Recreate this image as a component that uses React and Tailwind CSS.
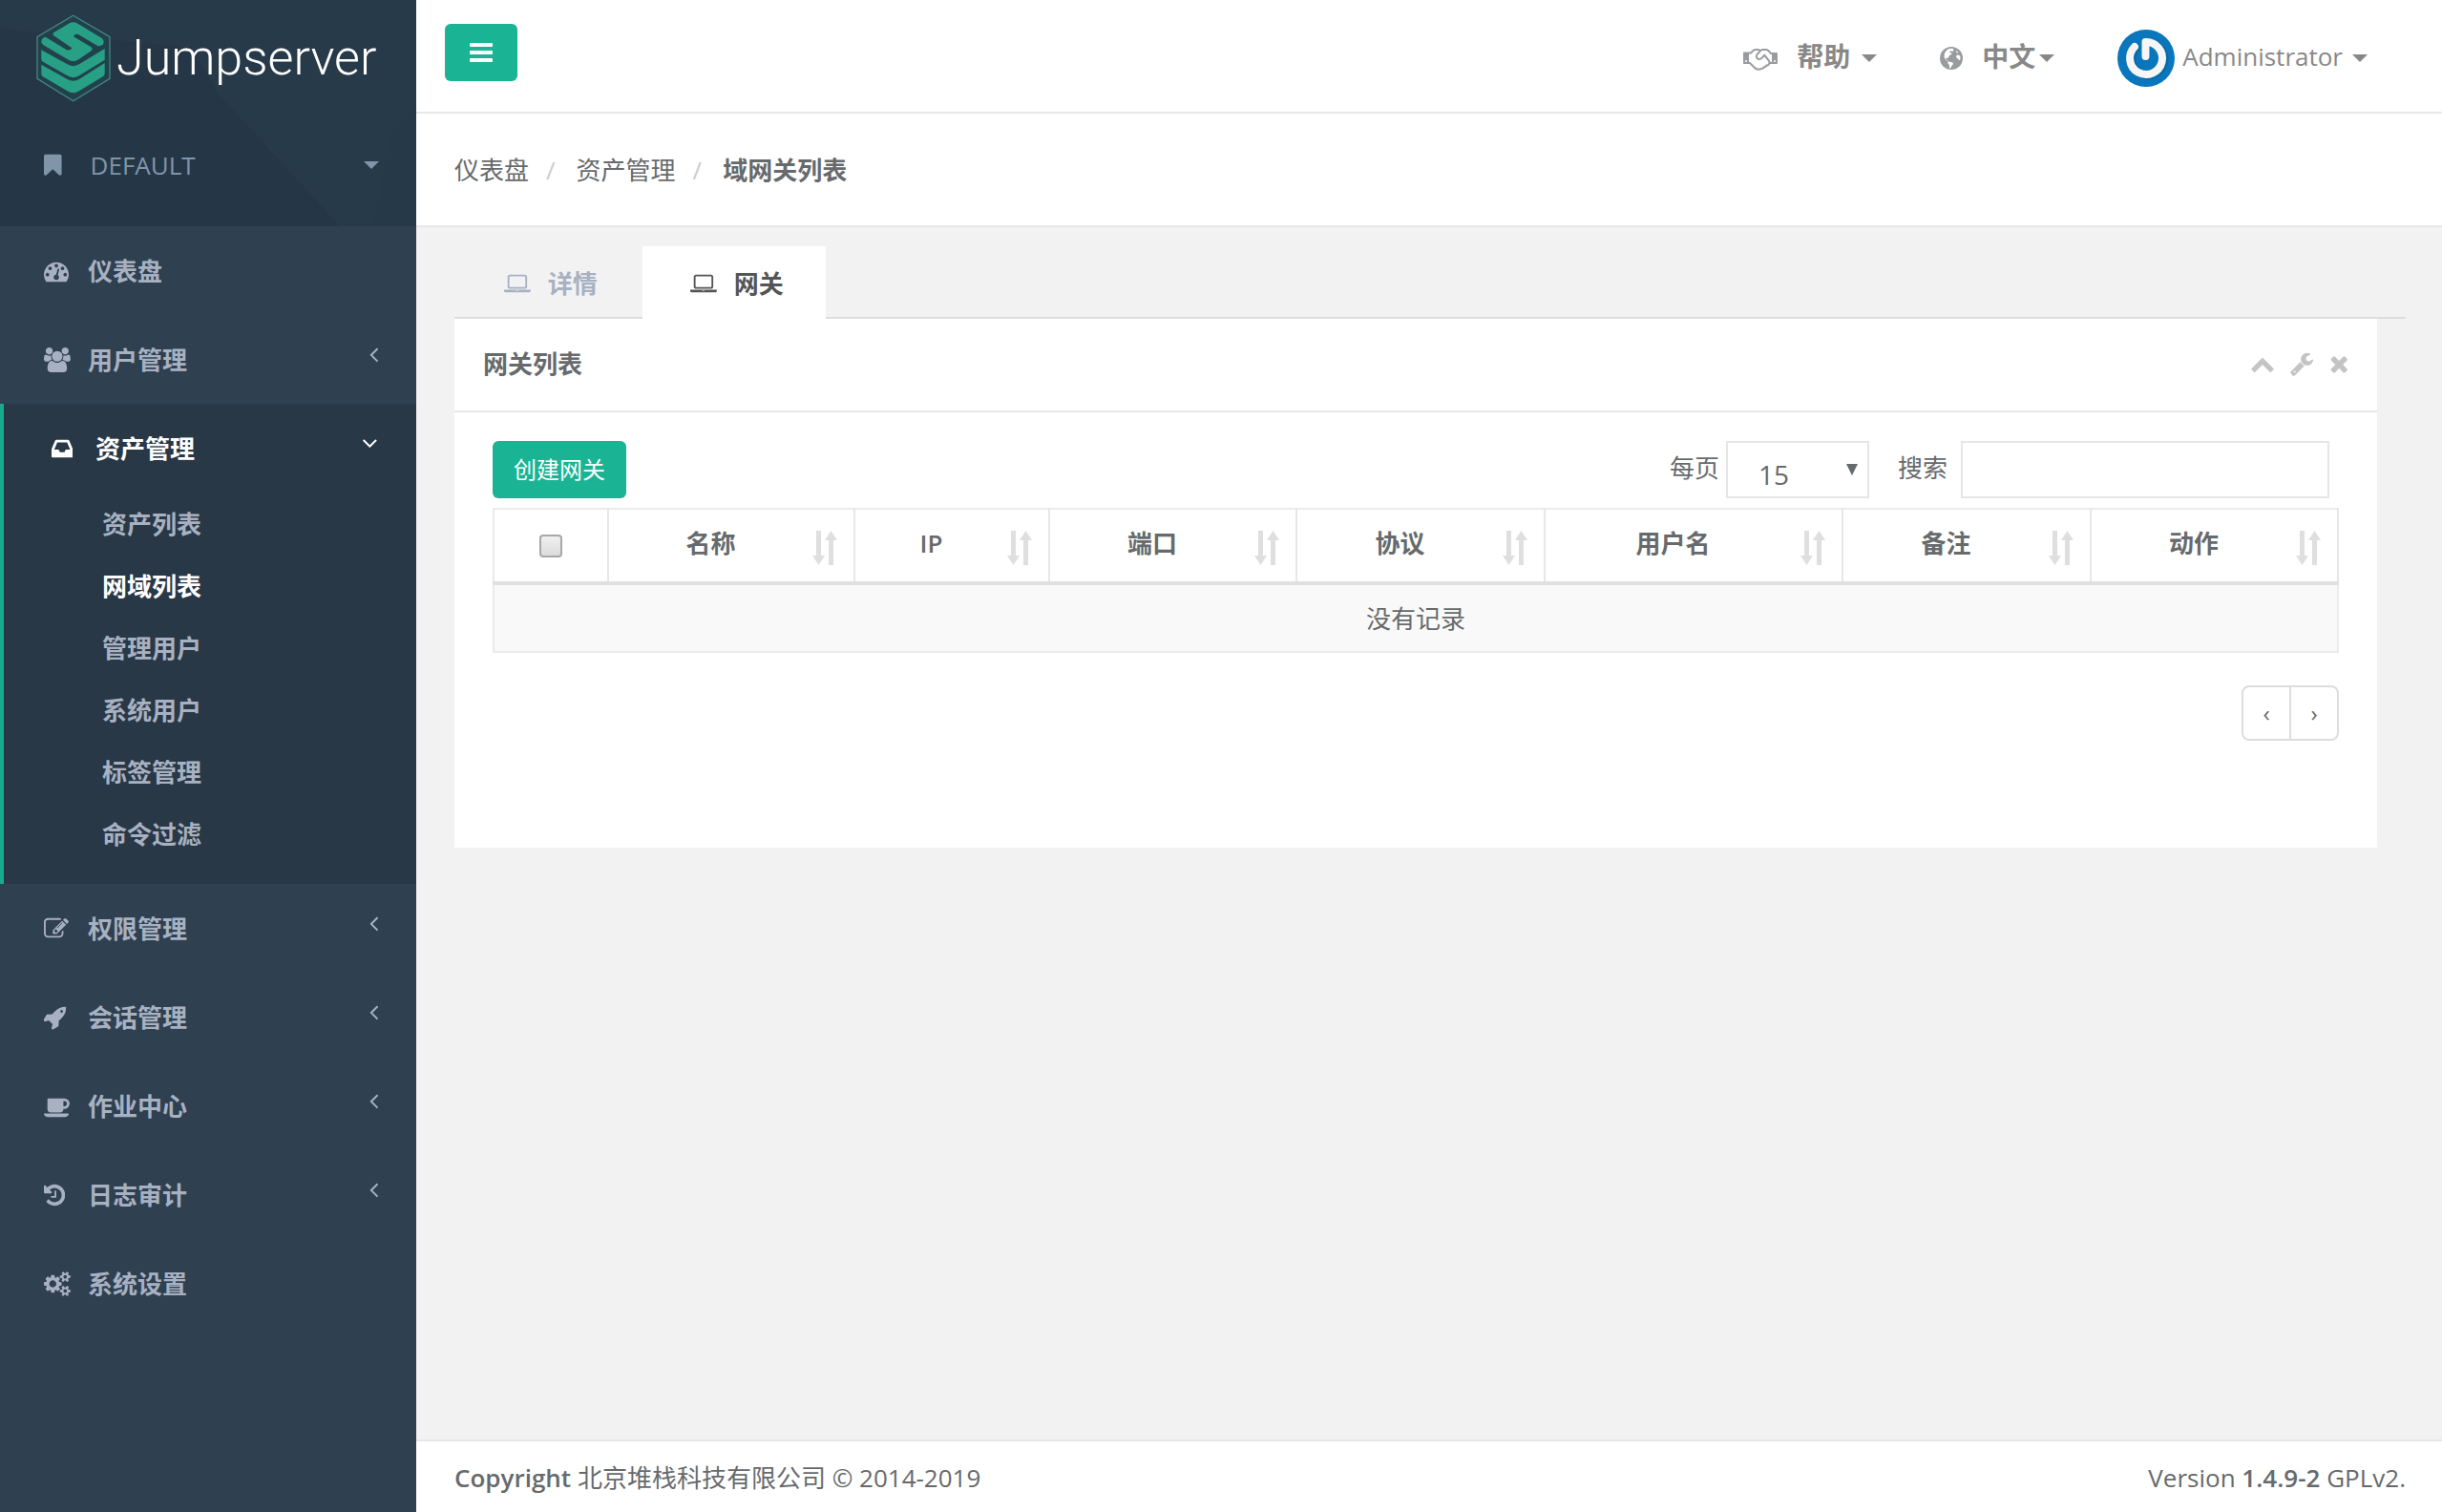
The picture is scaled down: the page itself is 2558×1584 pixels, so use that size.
import React from "react";

const ICONS = {
  bars: ["128 0 1536 1792", "M1664 1344v128q0 26-19 45t-45 19h-1408q-26 0-45-19t-19-45v-128q0-26 19-45t45-19h1408q26 0 45 19t19 45zm0-512v128q0 26-19 45t-45 19h-1408q-26 0-45-19t-19-45v-128q0-26 19-45t45-19h1408q26 0 45 19t19 45zm0-512v128q0 26-19 45t-45 19h-1408q-26 0-45-19t-19-45v-128q0-26 19-45t45-19h1408q26 0 45 19t19 45z"],
  dashboard: ["0 0 1792 1792", "M384 1152q0-53-37.5-90.5t-90.5-37.5-90.5 37.5-37.5 90.5 37.5 90.5 90.5 37.5 90.5-37.5 37.5-90.5zm192-448q0-53-37.5-90.5t-90.5-37.5-90.5 37.5-37.5 90.5 37.5 90.5 90.5 37.5 90.5-37.5 37.5-90.5zm428 481l101-382q6-26-7.5-48.5t-38.5-29.5-48 6.5-30 39.5l-101 382q-60 5-107 43.5t-63 98.5q-20 77 20 146t117 89 146-20 89-117q16-60-6-117t-72-91zm660-33q0-53-37.5-90.5t-90.5-37.5-90.5 37.5-37.5 90.5 37.5 90.5 90.5 37.5 90.5-37.5 37.5-90.5zm-640-640q0-53-37.5-90.5t-90.5-37.5-90.5 37.5-37.5 90.5 37.5 90.5 90.5 37.5 90.5-37.5 37.5-90.5zm448 192q0-53-37.5-90.5t-90.5-37.5-90.5 37.5-37.5 90.5 37.5 90.5 90.5 37.5 90.5-37.5 37.5-90.5zm320 448q0 261-141 483-19 29-54 29h-1402q-35 0-54-29-141-221-141-483 0-182 71-348t191-286 286-191 348-71 348 71 286 191 191 286 71 348z"],
  group: ["-64 0 1920 1792", "M529 896q-162 5-265 128h-134q-82 0-138-40.5t-56-118.5q0-353 124-353 6 0 43.5 21t97.5 42.5 119 21.5q67 0 133-23-5 37-5 66 0 139 81 256zm1071 637q0 120-73 189.5t-194 69.5h-874q-121 0-194-69.5t-73-189.5q0-53 3.5-103.5t14-109 26.5-108.5 43-97.5 62-81 85.5-53.5 111.5-20q10 0 43 21.5t73 48 107 48 135 21.5 135-21.5 107-48 73-48 43-21.5q61 0 111.5 20t85.5 53.5 62 81 43 97.5 26.5 108.5 14 109 3.5 103.5zm-1024-1277q0 106-75 181t-181 75-181-75-75-181 75-181 181-75 181 75 75 181zm704 384q0 159-112.5 271.5t-271.5 112.5-271.5-112.5-112.5-271.5 112.5-271.5 271.5-112.5 271.5 112.5 112.5 271.5zm576 225q0 78-56 118.5t-138 40.5h-134q-103-123-265-128 81-117 81-256 0-29-5-66 66 23 133 23 59 0 119-21.5t97.5-42.5 43.5-21q124 0 124 353zm-128-609q0 106-75 181t-181 75-181-75-75-181 75-181 181-75 181 75 75 181z"],
  inbox: ["128 0 1536 1792", "M1151 960h316q-1-3-2.5-8t-2.5-8l-212-496h-708l-212 496q-1 2-2.5 8t-2.5 8h316l95 192h320zm513 30v482q0 26-19 45t-45 19h-1408q-26 0-45-19t-19-45v-482q0-62 25-123l238-552q10-25 36.5-42t52.5-17h832q26 0 52.5 17t36.5 42l238 552q25 61 25 123z"],
  edit: ["0 0 1792 1792", "M888 1184l116-116-152-152-116 116v56h96v96h56zm440-720q-16-16-33 1l-350 350q-17 17-1 33t33-1l350-350q17-17 1-33zm80 594v190q0 119-84.5 203.5t-203.5 84.5h-832q-119 0-203.5-84.5t-84.5-203.5v-832q0-119 84.5-203.5t203.5-84.5h832q63 0 117 25 15 7 18 23 3 17-9 29l-49 49q-14 14-32 8-23-6-45-6h-832q-66 0-113 47t-47 113v832q0 66 47 113t113 47h832q66 0 113-47t47-113v-126q0-13 9-22l64-64q15-15 35-7t20 29zm-96-738l288 288-672 672h-288v-288zm444 132l-92 92-288-288 92-92q28-28 68-28t68 28l152 152q28 28 28 68t-28 68z"],
  rocket: ["64 0 1664 1792", "M1440 448q0-40-28-68t-68-28-68 28-28 68 28 68 68 28 68-28 28-68zm224-288q0 249-75.5 430.5t-253.5 360.5q-81 80-195 176l-20 379q-2 16-16 26l-384 224q-7 4-16 4-12 0-23-9l-64-64q-13-14-8-32l85-276-281-281-276 85q-3 1-9 1-14 0-23-9l-64-64q-17-19-5-39l224-384q10-14 26-16l379-20q96-114 176-195 188-187 358-258t431-71q14 0 24 9.5t10 22.5z"],
  coffee: ["0 0 1920 1792", "M1664 704q0-80-56-136t-136-56h-64v384h64q80 0 136-56t56-136zM0 1408h1792q0 106-75 181t-181 75h-1280q-106 0-181-75t-75-181zM1856 704q0 159-112.5 271.5t-271.5 112.5h-64v32q0 92-66 158t-158 66h-704q-92 0-158-66t-66-158v-736q0-26 19-45t45-19h1152q159 0 271.5 112.5t112.5 271.5z"],
  history: ["128 0 1536 1792", "M1664 896q0 156-61 298t-164 245-245 164-298 61q-172 0-327-72.5t-264-204.5q-7-10-6.5-22.5t8.5-20.5l137-138q10-9 25-9 16 2 23 12 73 95 179 147t225 52q104 0 198.5-40.5t163.5-109.5 109.5-163.5 40.5-198.5-40.5-198.5-109.5-163.5-163.5-109.5-198.5-40.5q-98 0-188 35.5t-160 101.5l137 138q31 30 14 69-17 40-59 40h-448q-26 0-45-19t-19-45v-448q0-42 40-59 39-17 69 14l130 129q107-101 244.5-156.5t284.5-55.5q156 0 298 61t245 164 164 245 61 298zm-640-288v448q0 14-9 23t-23 9h-320q-14 0-23-9t-9-23v-64q0-14 9-23t23-9h224v-352q0-14 9-23t23-9h64q14 0 23 9t9 23z"],
  cogs: ["0 0 1920 1792", "M896 896q0-106-75-181t-181-75-181 75-75 181 75 181 181 75 181-75 75-181zm768 512q0-52-38-90t-90-38-90 38-38 90q0 53 37.5 90.5t90.5 37.5 90.5-37.5 37.5-90.5zm0-1024q0-52-38-90t-90-38-90 38-38 90q0 53 37.5 90.5t90.5 37.5 90.5-37.5 37.5-90.5zm-384 421v185q0 10-7 19.5t-16 10.5l-155 24q-11 35-32 76 34 48 90 115 7 11 7 20 0 12-7 19-23 30-82.5 89.5t-78.5 59.5q-11 0-21-7l-115-90q-37 19-77 31-11 108-23 155-7 24-30 24h-186q-11 0-20-7.5t-10-17.5l-23-153q-34-10-75-31l-118 89q-7 7-20 7-11 0-21-8-144-133-144-160 0-9 7-19 10-14 41-53t47-61q-23-44-35-82l-152-24q-10-1-17-9.5t-7-19.5v-185q0-10 7-19.5t16-10.5l155-24q11-35 32-76-34-48-90-115-7-11-7-20 0-12 7-20 22-30 82-89t79-59q11 0 21 7l115 90q34-18 77-32 11-108 23-154 7-24 30-24h186q11 0 20 7.5t10 17.5l23 153q34 10 75 31l118-89q8-7 20-7 11 0 21 8 144 133 144 160 0 8-7 19-12 16-42 54t-45 60q23 48 34 82l152 23q10 2 17 10.5t7 19.5zm640 533v140q0 16-149 31-12 27-30 52 51 113 51 138 0 4-4 7-122 71-124 71-8 0-46-47t-52-68q-20 2-30 2t-30-2q-14 21-52 68t-46 47q-2 0-124-71-4-3-4-7 0-25 51-138-18-25-30-52-149-15-149-31v-140q0-16 149-31 13-29 30-52-51-113-51-138 0-4 4-7 4-2 35-20t59-34 30-16q8 0 46 46.5t52 67.5q20-2 30-2t30 2q51-71 92-112l6-2q4 0 124 70 4 3 4 7 0 25-51 138 17 23 30 52 149 15 149 31zm0-1024v140q0 16-149 31-12 27-30 52 51 113 51 138 0 4-4 7-122 71-124 71-8 0-46-47t-52-68q-20 2-30 2t-30-2q-14 21-52 68t-46 47q-2 0-124-71-4-3-4-7 0-25 51-138-18-25-30-52-149-15-149-31v-140q0-16 149-31 13-29 30-52-51-113-51-138 0-4 4-7 4-2 35-20t59-34 30-16q8 0 46 46.5t52 67.5q20-2 30-2t30 2q51-71 92-112l6-2q4 0 124 70 4 3 4 7 0 25-51 138 17 23 30 52 149 15 149 31z"],
  laptop: ["0 0 1920 1792", "M416 1280q-66 0-113-47t-47-113v-704q0-66 47-113t113-47h1088q66 0 113 47t47 113v704q0 66-47 113t-113 47h-1088zm-32-864v704q0 13 9.5 22.5t22.5 9.5h1088q13 0 22.5-9.5t9.5-22.5v-704q0-13-9.5-22.5t-22.5-9.5h-1088q-13 0-22.5 9.5t-9.5 22.5zm1376 928h160v96q0 40-47 68t-113 28h-1600q-66 0-113-28t-47-68v-96h1760zm-720 96q16 0 16-16t-16-16h-160q-16 0-16 16t16 16h160z"],
  bookmark: ["256 0 1280 1792", "M1420 128q23 0 44 9 33 13 52.5 41t19.5 62v1289q0 34-19.5 62t-52.5 41q-19 8-44 8-48 0-83-32l-441-424-441 424q-36 33-83 33-23 0-44-9-33-13-52.5-41t-19.5-62v-1289q0-34 19.5-62t52.5-41q21-9 44-9h1048z"],
  wrench: ["64 0 1664 1792", "M448 1472q0-26-19-45t-45-19-45 19-19 45 19 45 45 19 45-19 19-45zm644-420l-682 682q-37 37-90 37-52 0-91-37l-106-108q-38-36-38-90 0-53 38-91l681-681q39 98 114.5 173.5t173.5 114.5zm634-435q0 39-23 106-47 134-164.5 217.5t-258.5 83.5q-185 0-316.5-131.5t-131.5-316.5 131.5-316.5 316.5-131.5q58 0 121.5 16.5t107.5 46.5q16 11 16 28t-16 28l-293 169v224l193 107q5-3 79-48.5t135.5-81 70.5-35.5q15 0 23.5 10t8.5 25z"],
  times: ["192 0 1408 1792", "M1490 1322q0 40-28 68l-136 136q-28 28-68 28t-68-28l-294-294-294 294q-28 28-68 28t-68-28l-136-136q-28-28-28-68t28-68l294-294-294-294q-28-28-28-68t28-68l136-136q28-28 68-28t68 28l294 294 294-294q28-28 68-28t68 28l136 136q28 28 28 68t-28 68l-294 294 294 294q28 28 28 68z"],
  chevronUp: ["0 0 1792 1792", "M1683 1331l-166 165q-19 19-45 19t-45-19l-531-531-531 531q-19 19-45 19t-45-19l-166-165q-19-19-19-45.5t19-45.5l742-741q19-19 45-19t45 19l742 741q19 19 19 45.5t-19 45.5z"],
  angleLeft: ["576 0 640 1792", "M1203 544q0 13-10 23l-393 393 393 393q10 10 10 23t-10 23l-50 50q-10 10-23 10t-23-10l-466-466q-10-10-10-23t10-23l466-466q10-10 23-10t23 10l50 50q10 10 10 23z"],
  angleDown: ["320 0 1152 1792", "M1395 736q0 13-10 23l-466 466q-10 10-23 10t-23-10l-466-466q-10-10-10-23t10-23l50-50q10-10 23-10t23 10l393 393 393-393q10-10 23-10t23 10l50 50q10 10 10 23z"],
  handshake: ["0 0 2304 1792", "M192 1152q40 0 56-32t0-64-56-32-56 32 0 64 56 32zm1473-58q-10-13-38.5-50t-41.5-54-38-49-42.5-53-40.5-47-45-49l-125 140q-83 94-208.5 92t-205.5-98q-57-69-56.5-158t58.5-157l177-206q-22-11-51-16.5t-47.5-6-56.5.5-49 1q-92 0-158 66l-158 158h-155v544q5 0 21-.5t22 0 19.5 2 20.5 4.500 17.500 8.500 18.500 13.500l297 292q115 111 227 111 78 0 125-47 57 20 112.5-8t72.5-85q74 6 127-44 20-18 36-45.5t14-50.5q10 10 43 10 43 0 77-21t49.500-53 12-71.500-30.500-73.500zm159 58h96v-512h-93l-157-180q-66-76-169-76h-167q-89 0-146 67l-209 243q-28 33-28 75t27 75q43 51 110 52t111-49l193-218q25-23 53.5-21.5t47 27 8.5 56.5q16 19 56 63t60 68q29 36 82.5 105.5t64.5 84.5q52 66 60 140zm288 0q40 0 56-32t0-64-56-32-56 32 0 64 56 32zm192-576v640q0 26-19 45t-45 19h-434q-27 65-82 106.5t-125 51.5q-33 48-80.5 81.5t-102.5 45.5q-42 53-104.5 81.5t-128.5 24.5q-60 34-126 39.5t-127.5-14-117-53.5-103.5-81l-287-282h-358q-26 0-45-19t-19-45v-672q0-26 19-45t45-19h421q14-14 47-48t47.5-48 44-40 50.5-37.5 51-25.5 62-19.5 68-5.5h117q99 0 181 56 82-56 181-56h167q35 0 67 6t56.5 14.5 51.5 26.5 44.5 31 43 39.5 39 42 41 48 41.5 48.5h355q26 0 45 19t19 45z"],
};

function Icon({ name, className = "h-[26px]" }) {
  const [box, d] = ICONS[name];
  return (
    <svg viewBox={box} className={`w-auto shrink-0 ${className}`} fill="currentColor" aria-hidden="true">
      <path d={d} />
    </svg>
  );
}

function Globe() {
  return (
    <svg viewBox="0 0 24 24" className="size-6 shrink-0" aria-hidden="true">
      <circle cx="12" cy="12" r="12" fill="currentColor" />
      <path
        fill="#fff"
        d="M9.2 2.2l2.4-.5 2.2.3 1 .9-1.2.9.4 1.1-1.2.2-.9-.9-1.3.5-.5 1.2 1.6.3.9 1-.6.9-1.7 1-1.2 1.5-.3 1.4-1.3-.6-1.2.8.3 1.3 1.2.4.8 1.3 1.5.5 1.9.2 1.9 1.2-.3 1.6-1.4 1.5-.5 1.3-.6 1.1-1.2-.3.1-2.2-.7-1.9-1.1-1.3.4-1.6-1.8-1-1.3-1.6-.9-2.3.1-2.9 1.2-2.2 1.7-2 2-1.6z"
      />
      <path fill="#fff" d="M17.4 9.2l1.6-.8 1.5.5.9 1.6.2 1.7-.9 1.7-1 .2-.3-1.4-1.5-.6-.8-1.4zM17 4.3l1.3.6.9 1.1-1 .4-1.3-.8z" />
    </svg>
  );
}

function Caret() {
  return (
    <svg viewBox="0 0 16 8" className="h-2 w-4 shrink-0" fill="currentColor" aria-hidden="true">
      <path d="M0 0h16l-8 8z" />
    </svg>
  );
}

function SortIcon() {
  return (
    <svg viewBox="0 0 26 36" className="mt-1 h-9 w-[26px] shrink-0 text-[#dfdfdf]" fill="currentColor" aria-hidden="true">
      <path d="M4 0h5v26h4l-6.500 10l-6.500-10h4z" />
      <path d="M17 36h5v-26h4l-6.500-10l-6.500 10h4z" />
    </svg>
  );
}

function LogoMark() {
  return (
    <svg viewBox="53 43 236 277" className="h-[92px] w-[78px] shrink-0" aria-hidden="true">
      <path d="M170 46L286 114V246L170 317L56 246V114Z" fill="#21414c" stroke="#44877f" strokeWidth="4" />
      <g fill="#28a085">
        <path d="M69 128Q70 117 82 114L148 154Q160 160 166 149L108 110Q103 103 110 99L157 71Q170 64 183 71L262 119Q270 128 264 139L250 144L186 106Q174 102 171 113L228 147Q233 153 227 158L186 186Q170 197 154 186L76 140Q68 135 69 128Z" />
        <path d="M69 155L150 200Q170 213 190 200L270 151V187L190 236Q170 249 150 236L73 192Q69 189 69 184Z" />
        <path d="M69 202L150 247Q170 259 190 247L270 197V229Q270 236 264 240L190 284Q170 298 150 284L74 240Q69 236 69 229Z" />
      </g>
    </svg>
  );
}

function Avatar() {
  return (
    <svg viewBox="0 0 60 60" className="size-[60px] shrink-0" role="img" aria-label="Administrator">
      <circle cx="30" cy="30" r="30" fill="#0a76bb" />
      <g fill="none" strokeLinecap="round" strokeLinejoin="round">
        <path d="M19 20A17 17 0 1 0 30 14V28" stroke="#075a94" strokeOpacity=".45" strokeWidth="9" />
        <path d="M18 18A17 17 0 1 0 29.500 13V28" stroke="#f6f6f6" strokeWidth="8" />
      </g>
    </svg>
  );
}

const ASSET_LINKS = ["资产列表", "网域列表", "管理用户", "系统用户", "标签管理", "命令过滤"];

const LOWER_MENU = [
  ["edit", "权限管理", true],
  ["rocket", "会话管理", true],
  ["coffee", "作业中心", true],
  ["history", "日志审计", true],
  ["cogs", "系统设置", false],
];

function MenuItem({ icon, label, arrow }) {
  return (
    <li>
      <a href="#" className="flex h-[93px] items-center pr-10 pl-[46px]">
        <span className="flex w-[46px]">
          <Icon name={icon} />
        </span>
        <span className="flex-1">{label}</span>
        {arrow && <Icon name="angleLeft" className="mb-3 h-[26px]" />}
      </a>
    </li>
  );
}

function Sidebar() {
  return (
    <aside className="w-[436px] shrink-0 bg-[#2f4050] text-[#a7b1c2]">
      <div className="relative h-[237px] overflow-hidden bg-[#253747]">
        <svg viewBox="0 0 436 237" className="absolute inset-0 size-full" preserveAspectRatio="none" aria-hidden="true">
          <path d="M0 0H230L200 50L0 30Z" fill="#273a4a" />
          <path d="M230 0H436V237H356L230 100L200 50Z" fill="#273a49" />
          <path d="M410 140L436 110V237H390Z" fill="#263948" />
        </svg>
        <div className="relative">
          <a href="#" className="flex h-[122px] items-center pl-[38px] text-white">
            <LogoMark />
            <span className="ml-1.5 font-[Roboto] text-[52px] leading-none font-light">Jumpserver</span>
          </a>
          <button type="button" className="flex h-[102px] w-full items-center pr-[39px] pl-[46px] text-left text-[#8095a8]">
            <Icon name="bookmark" />
            <span className="ml-[30px] flex-1">DEFAULT</span>
            <Caret />
          </button>
        </div>
      </div>
      <nav className="font-bold">
        <ul>
          <MenuItem icon="dashboard" label="仪表盘" />
          <MenuItem icon="group" label="用户管理" arrow />
          <li className="border-l-4 border-[#19aa8d] bg-[#293846] pb-5">
            <a href="#" className="flex h-[93px] items-center pr-10 pl-[50px] text-white">
              <span className="flex w-[46px]">
                <Icon name="inbox" />
              </span>
              <span className="flex-1">资产管理</span>
              <Icon name="angleDown" className="mb-3 h-[26px]" />
            </a>
            <ul>
              {ASSET_LINKS.map((label) => (
                <li key={label}>
                  <a
                    href="#"
                    className={`flex h-[65px] items-center pl-[103px] ${label === "网域列表" ? "text-white" : ""}`}
                  >
                    {label}
                  </a>
                </li>
              ))}
            </ul>
          </li>
          {LOWER_MENU.map(([icon, label, arrow]) => (
            <MenuItem key={label} icon={icon} label={label} arrow={arrow} />
          ))}
        </ul>
      </nav>
    </aside>
  );
}

function TopBar() {
  return (
    <header className="flex h-[119px] items-start justify-between border-b-2 border-[#e7e7e7] bg-white pr-[78px] pl-[30px] text-[#888]">
      <button
        type="button"
        aria-label="菜单"
        className="mt-[25px] flex h-[60px] w-[76px] items-center justify-center rounded-md bg-[#1ab394] text-white"
      >
        <Icon name="bars" className="h-7" />
      </button>
      <div className="flex h-[121px] items-center">
        <button type="button" className="flex items-center text-[28px] font-bold">
          <span className="text-[#999c9e]">
            <Icon name="handshake" className="h-7" />
          </span>
          <span className="mr-3 mb-1 ml-5">帮助</span>
          <Caret />
        </button>
        <button type="button" className="ml-[66px] flex items-center text-[28px] font-bold">
          <span className="text-[#999c9e]">
            <Globe />
          </span>
          <span className="mr-1 mb-1 ml-5">中文</span>
          <Caret />
        </button>
        <button type="button" className="ml-[66px] flex items-center">
          <Avatar />
          <span className="mr-2.5 mb-1 ml-2">Administrator</span>
          <Caret />
        </button>
      </div>
    </header>
  );
}

function Breadcrumb() {
  return (
    <nav className="flex h-[119px] items-center border-b-2 border-[#e7e7e7] bg-white px-10">
      <a href="#">仪表盘</a>
      <span className="mr-[22px] ml-[18px] text-[#ccc]">/</span>
      <a href="#">资产管理</a>
      <span className="mr-[22px] ml-[18px] text-[#ccc]">/</span>
      <strong>域网关列表</strong>
    </nav>
  );
}

const COLUMNS = [
  ["名称", "w-[258px]"],
  ["IP", "w-[204px]"],
  ["端口", "w-[259px]"],
  ["协议", "w-[260px]"],
  ["用户名", "w-[312px]"],
  ["备注", "w-[260px]"],
  ["动作", "w-[259px]"],
];

function GatewayTable() {
  return (
    <table className="w-full table-fixed border-collapse border-2 border-[#ebebeb]">
      <thead>
        <tr className="border-b-4 border-[#e0e0e0]">
          <th className="w-[120px] border-r-2 border-[#e7e7e7]">
            <input
              type="checkbox"
              aria-label="全选"
              className="mx-auto block size-6 appearance-none rounded border-2 border-[#a8a8a8] bg-linear-to-b from-[#f0f0f0] to-[#dcdcdc]"
            />
          </th>
          {COLUMNS.map(([label, width]) => (
            <th key={label} className={`h-[78px] border-r-2 border-[#e7e7e7] p-0 ${width}`}>
              <div className="flex items-center pr-[17px]">
                <span className={`mb-1.5 flex-1 ${label === "IP" ? "font-semibold" : "font-bold"}`}>{label}</span>
                <SortIcon />
              </div>
            </th>
          ))}
        </tr>
      </thead>
      <tbody>
        <tr>
          <td colSpan={8} className="h-[72px] bg-[#f9f9f9] text-center">
            没有记录
          </td>
        </tr>
      </tbody>
    </table>
  );
}

function GatewayCard() {
  return (
    <section className="mr-[30px] bg-white pb-28">
      <div className="flex h-[98px] items-center border-b-2 border-[#e7e7e7] px-[30px] pb-0.5">
        <h5 className="flex-1 font-bold">网关列表</h5>
        <div className="flex items-center gap-4 text-[#c4c4c4]">
          <button type="button" aria-label="收起">
            <Icon name="chevronUp" />
          </button>
          <button type="button" aria-label="设置">
            <Icon name="wrench" />
          </button>
          <button type="button" aria-label="关闭">
            <Icon name="times" />
          </button>
        </div>
      </div>
      <div className="px-10 pt-[30px]">
        <div className="flex items-center justify-between pr-2.5">
          <button type="button" className="h-[60px] rounded-md bg-[#1ab394] px-[22px] text-2xl text-white">
            创建网关
          </button>
          <div className="flex items-center">
            <label htmlFor="page-size" className="mb-1">
              每页
            </label>
            <div className="relative ml-[7px]">
              <select
                id="page-size"
                defaultValue="15"
                className="block h-[60px] w-[150px] appearance-none border-2 border-[#e5e6e7] bg-white pt-2.5 pl-8 text-[28px]"
              >
                <option>15</option>
                <option>25</option>
                <option>50</option>
              </select>
              <svg viewBox="0 0 12 12" className="pointer-events-none absolute top-6 right-3 size-3" fill="currentColor" aria-hidden="true">
                <path d="M0 0h12l-6 12z" />
              </svg>
            </div>
            <label htmlFor="search" className="mb-1 ml-[30px]">
              搜索
            </label>
            <input id="search" type="text" className="ml-3.5 h-[60px] w-[386px] border-2 border-[#e5e6e7] bg-white px-6" />
          </div>
        </div>
        <div className="mt-2.5 pr-0.5">
          <GatewayTable />
        </div>
        <div className="mt-[34px] flex justify-end">
          <div className="flex h-[58px] divide-x-2 divide-[#ddd] rounded-lg border-2 border-[#ddd] text-2xl">
            <button type="button" aria-label="上一页" className="w-[50px]">
              ‹
            </button>
            <button type="button" aria-label="下一页" className="w-[48px]">
              ›
            </button>
          </div>
        </div>
      </div>
    </section>
  );
}

export default function App() {
  return (
    <div
      lang="zh-CN"
      className="flex min-h-screen bg-[#f3f3f4] font-['Open_Sans','Noto_Sans_CJK_SC',sans-serif] text-[26px] leading-9 text-[#676a6c]"
    >
      <Sidebar />
      <div className="flex min-w-0 flex-1 flex-col bg-[#f2f2f2]">
        <TopBar />
        <Breadcrumb />
        <main className="flex-1 px-10 pt-5 pr-[38px]">
          <div className="flex h-[76px] border-b-2 border-[#ddd] font-bold">
            <a href="#" className="flex items-center pt-1 pr-[47px] pl-[52px] text-[#a7b1c2]">
              <Icon name="laptop" />
              <span className="ml-[18px]">详情</span>
            </a>
            <a href="#" className="-mb-0.5 flex items-center bg-white pt-0.5 pr-11 pl-[50px] text-[#555]">
              <Icon name="laptop" />
              <span className="ml-[18px]">网关</span>
            </a>
          </div>
          <GatewayCard />
        </main>
        <footer className="flex h-[76px] items-center justify-between border-t-2 border-[#e7e7e7] bg-white pt-0.5 pr-[38px] pl-10">
          <div>
            <strong className="font-semibold">Copyright</strong> 北京堆栈科技有限公司 © 2014-2019
          </div>
          <div>
            Version <strong className="font-semibold">1.4.9-2</strong> GPLv2.
          </div>
        </footer>
      </div>
    </div>
  );
}
